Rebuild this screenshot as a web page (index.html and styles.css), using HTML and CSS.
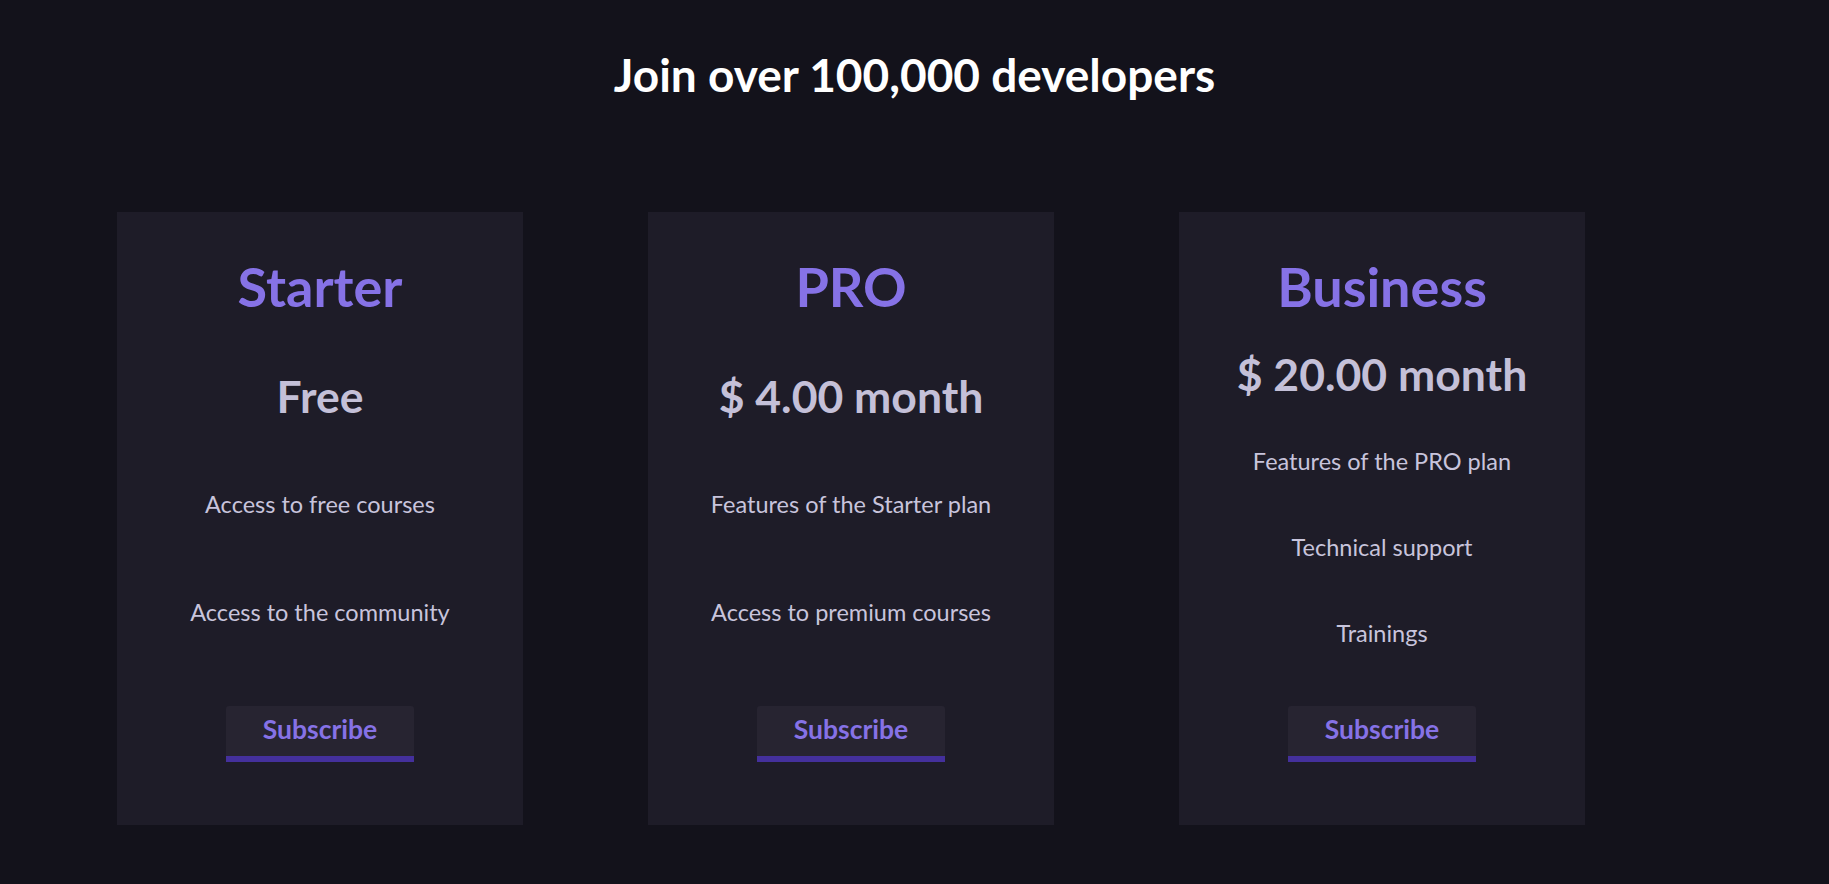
FILE: index.html
```html
<!DOCTYPE html>
<html lang="en">
<head>
<meta charset="utf-8">
<title>Pricing</title>
<link rel="stylesheet" href="styles.css">
</head>
<body>
<main class="page">
  <h1 class="title">Join over 100,000 developers</h1>
  <section class="plans">
    <article class="plan">
      <h2 class="plan-name">Starter</h2>
      <div class="plan-body">
        <p class="plan-price">Free</p>
        <p class="plan-feature">Access to free courses</p>
        <p class="plan-feature">Access to the community</p>
      </div>
      <button class="plan-btn">Subscribe</button>
    </article>
    <article class="plan">
      <h2 class="plan-name">PRO</h2>
      <div class="plan-body">
        <p class="plan-price">$ 4.00 month</p>
        <p class="plan-feature">Features of the Starter plan</p>
        <p class="plan-feature">Access to premium courses</p>
      </div>
      <button class="plan-btn">Subscribe</button>
    </article>
    <article class="plan">
      <h2 class="plan-name">Business</h2>
      <div class="plan-body">
        <p class="plan-price">$ 20.00 month</p>
        <p class="plan-feature">Features of the PRO plan</p>
        <p class="plan-feature">Technical support</p>
        <p class="plan-feature">Trainings</p>
      </div>
      <button class="plan-btn">Subscribe</button>
    </article>
  </section>
</main>
</body>
</html>
```
FILE: styles.css
```css
* { box-sizing: border-box; }
html, body { margin: 0; padding: 0; }
body {
  background: #13121b;
  font-family: Lato, "Open Sans", sans-serif;
  width: 1829px;
  height: 884px;
  overflow: hidden;
}
.page { display: flex; flex-direction: column; }
.title {
  margin: 0;
  padding-top: 45px;
  height: 212px;
  text-align: center;
  color: #ffffff;
  font-size: 46px;
  font-weight: 700;
  line-height: 60px;
}
.plans { display: flex; gap: 125px; padding-left: 117px; }
.plan {
  width: 406px;
  height: 613px;
  background: #1e1c28;
  display: flex;
  flex-direction: column;
  align-items: center;
  padding: 47px 0 63px;
  text-align: center;
}
.plan-name {
  margin: 0;
  height: 55px;
  line-height: 55px;
  color: #8672e6;
  font-size: 54px;
  font-weight: 700;
}
.plan-body {
  flex: 1;
  width: 100%;
  display: flex;
  flex-direction: column;
  justify-content: space-evenly;
}
.plan-body p { margin: 0; height: 50px; line-height: 50px; white-space: nowrap; }
.plan-price { color: #c4c0d8; font-size: 44.5px; font-weight: 700; line-height: 48px !important; }
.plan-feature { color: #c8c4dc; font-size: 23.5px; }
.plan-btn {
  margin-top: 12px;
  width: 188px;
  height: 56px;
  padding: 0 0 4px;
  border: 0;
  border-bottom: 6px solid #44309c;
  border-radius: 3px 3px 0 0;
  background: #272431;
  color: #8672e6;
  font-family: inherit;
  font-size: 26.5px;
  font-weight: 700;
}
```
